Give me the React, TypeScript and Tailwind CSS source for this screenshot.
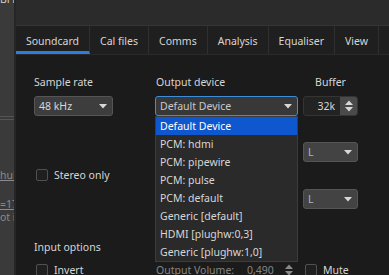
import type { ReactNode } from 'react';

function Arrow({ color = '#d8d8d8' }: { color?: string }) {
    return (
        <svg width="8" height="5" viewBox="0 0 8 5" className="shrink-0">
            <path d="M0 0h8L4 4.6z" fill={color} />
        </svg>
    );
}

function UpDown({ color = '#d8d8d8' }: { color?: string }) {
    return (
        <svg width="8" height="12" viewBox="0 0 8 12" className="shrink-0">
            <path d="M0 5h8L4 0.5z" fill={color} />
            <path d="M0 7h8L4 11.5z" fill={color} />
        </svg>
    );
}

function Check({ label, dim }: { label: string; dim?: boolean }) {
    return (
        <div className="flex h-4 items-center gap-[6px]">
            <div className="h-[12px] w-[12px] rounded-[2px] border border-[#505050] bg-[#1f1f1f]" />
            <span className={dim ? 'text-[#8c8c8c]' : 'text-[#d6d6d6]'}>{label}</span>
        </div>
    );
}

function Combo({ children, className }: { children: ReactNode; className: string }) {
    return (
        <div className={`flex h-[20px] items-center justify-between rounded-[3px] border pl-[4px] pr-[5px] ${className}`}>
            {children}
            <Arrow />
        </div>
    );
}

const devices = [
    'Default Device',
    'PCM: hdmi',
    'PCM: pipewire',
    'PCM: pulse',
    'PCM: default',
    'Generic [default]',
    'HDMI [plughw:0,3]',
    'Generic [plughw:1,0]',
];

const tabs = ['Soundcard', 'Cal files', 'Comms', 'Analysis', 'Equaliser', 'View'];

export default function App() {
    return (
        <div className="flex h-[275px] w-[389px] overflow-hidden bg-[#1b1b1b] font-['Noto_Sans',sans-serif] text-[10.5px] leading-4 text-[#d6d6d6]">
            {/* window behind */}
            <div className="flex w-[16px] shrink-0 flex-col overflow-hidden border-r-2 border-[#262626] bg-[#3a3a3a] text-[#8a8a8a]">
                <div className="-mt-[9px] shrink-0 whitespace-nowrap text-[#cfcfcf]">BFL</div>
                <div className="mt-[109px] h-px shrink-0 bg-[#555]" />
                <div className="mt-[2px] h-px shrink-0 bg-[#555]" />
                <div className="mt-[47px] shrink-0 whitespace-nowrap underline">hub</div>
                <div className="mt-[13px] shrink-0 whitespace-nowrap underline">=17</div>
                <div className="-mt-[3px] shrink-0 whitespace-nowrap">ot in</div>
            </div>

            {/* dialog */}
            <div className="flex min-w-0 flex-1 flex-col">
                <div className="h-[26px] shrink-0 border-b border-[#353535] bg-[#2b2b2b]" />
                <div className="flex h-[29px] shrink-0 border-b border-[#2a2a2a] bg-[#1f1f1f]">
                    {tabs.map((t, i) => (
                        <div
                            key={t}
                            className={`flex shrink-0 items-center whitespace-nowrap border-r border-[#2f2f2f] px-[10px] pt-[1px] ${
                                i === 0 ? 'border-b-[3px] border-b-[#2a7fe0] pt-[4px]' : ''
                            }`}
                        >
                            {t}
                        </div>
                    ))}
                </div>

                <div className="relative flex min-h-0 flex-1 flex-col pl-[18px] pt-[19px]">
                    <div className="flex shrink-0">
                        <div className="flex w-[79px] flex-col">
                            <div>Sample rate</div>
                            <Combo className="mt-[6px] border-[#555] bg-[#3d3d3d]">
                                <span>48 kHz</span>
                            </Combo>
                            <div className="ml-[2px] mt-[51px]">
                                <Check label="Stereo only" />
                            </div>
                        </div>

                        <div className="ml-[42px] flex w-[143px] flex-col">
                            <div className="pl-[1px]">Output device</div>
                            <Combo className="mt-[6px] border-[#3d8ed8] bg-[#383838] text-[#c8c8c8]">
                                <span>Default Device</span>
                            </Combo>
                        </div>

                        <div className="ml-[5px] flex w-[55px] flex-col">
                            <div className="text-center">Buffer</div>
                            <div className="mt-[6px] flex h-[20px] overflow-hidden rounded-[3px] border border-[#343434] bg-[#232323]">
                                <div className="flex flex-1 items-center justify-end pr-[5px]">32k</div>
                                <div className="flex w-[17px] items-center justify-center bg-[#4a4a4a]">
                                    <UpDown />
                                </div>
                            </div>
                            <Combo className="mt-[26px] border-[#555] bg-[#434343] text-[#a9b6c8]">
                                <span>L</span>
                            </Combo>
                            <Combo className="mt-[27px] border-[#555] bg-[#434343] text-[#a9b6c8]">
                                <span>L</span>
                            </Combo>
                        </div>
                    </div>

                    <div className="mt-[30px] shrink-0">Input options</div>
                    <div className="mt-[7px] flex shrink-0 items-center">
                        <div className="ml-[2px] w-[120px]">
                            <Check label="Invert" />
                        </div>
                        <div className="w-[91px] text-[#858585]">Output Volume:</div>
                        <div className="w-[38px] text-[#858585]">0,490</div>
                        <UpDown color="#8a8a8a" />
                        <div className="ml-[12px]">
                            <Check label="Mute" />
                        </div>
                    </div>

                    {/* open device list */}
                    <div className="absolute left-[139px] top-[61px] w-[143px] border border-[#3c3c3c] bg-[#2a2a2a]">
                        {devices.map((d, i) => (
                            <div
                                key={d}
                                className={`h-[18px] pl-[4px] leading-[18px] ${
                                    i === 0 ? 'bg-[#0e57cf] text-white' : 'text-[#d6d6d6]'
                                }`}
                            >
                                {d}
                            </div>
                        ))}
                    </div>
                </div>
            </div>
        </div>
    );
}
